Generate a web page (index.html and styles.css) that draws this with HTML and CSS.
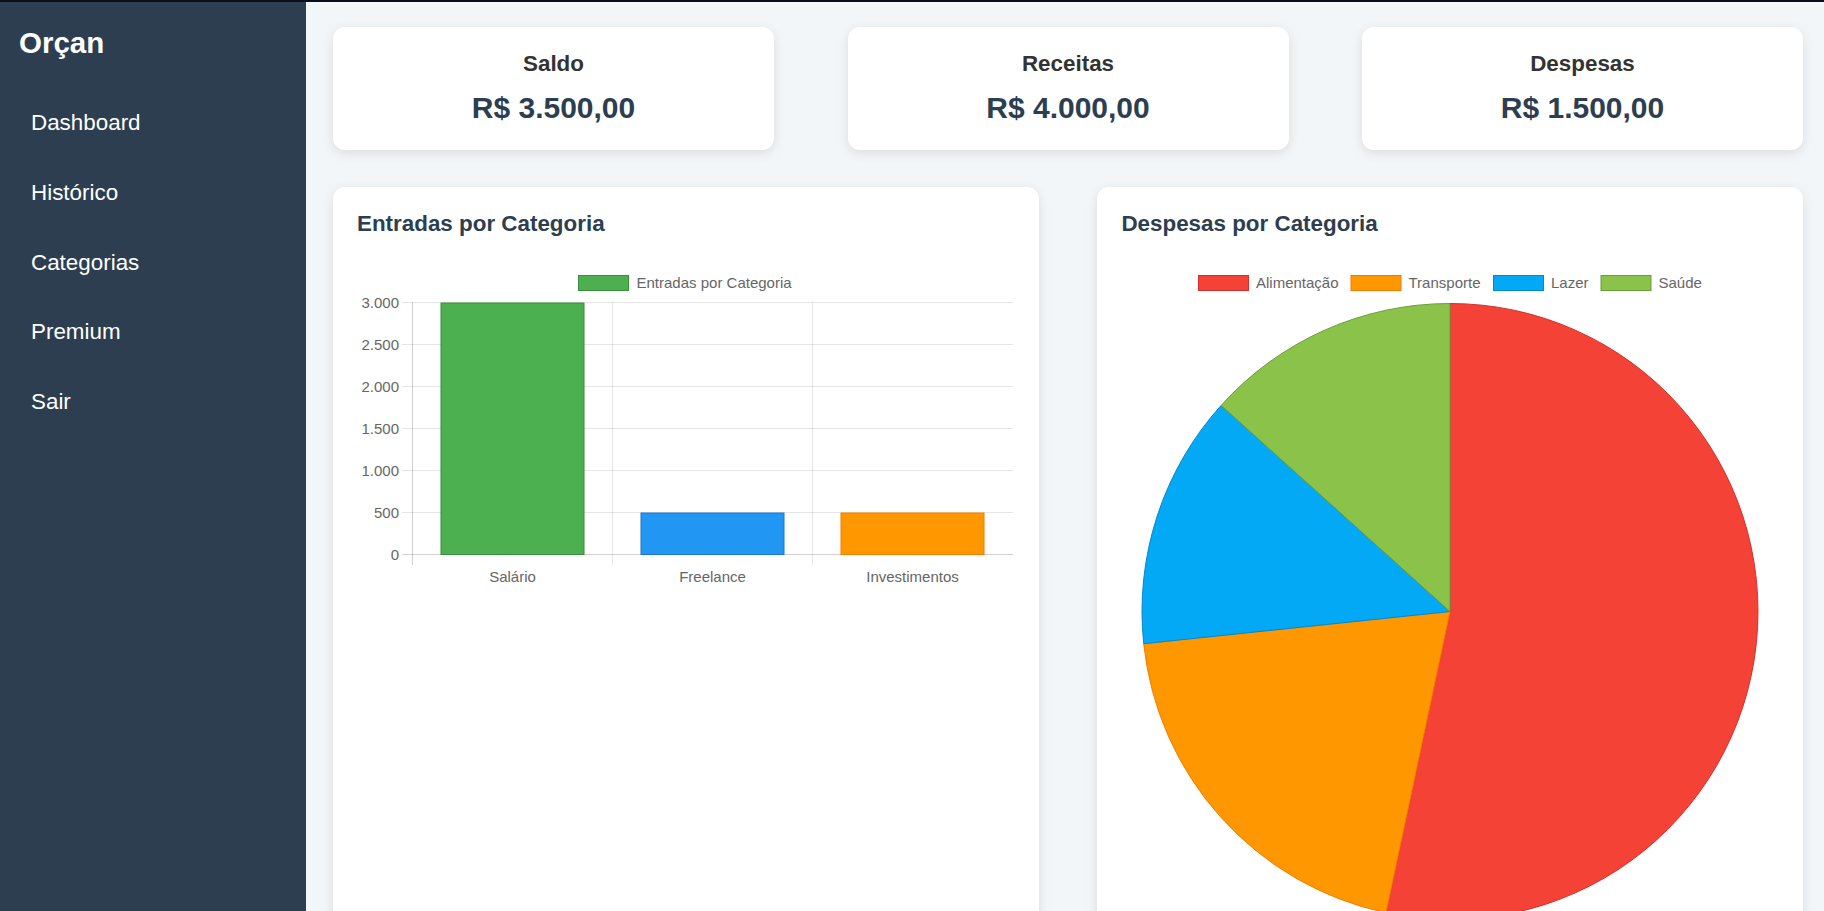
FILE: index.html
```html
<!DOCTYPE html>
<html lang="pt-BR">
<head>
<meta charset="utf-8">
<title>Orçan - Dashboard</title>
<link rel="stylesheet" href="styles.css">
</head>
<body>
<div class="topbar"></div>
<div class="app">
  <aside class="sidebar">
    <h2 class="brand">Orçan</h2>
    <nav class="nav">
      <a class="nav-link" href="#">Dashboard</a>
      <a class="nav-link" href="#">Histórico</a>
      <a class="nav-link" href="#">Categorias</a>
      <a class="nav-link" href="#">Premium</a>
      <a class="nav-link" href="#">Sair</a>
    </nav>
  </aside>
  <main class="main">
    <section class="stats">
      <div class="stat-card">
        <h3 class="stat-title">Saldo</h3>
        <p class="stat-value">R$ 3.500,00</p>
      </div>
      <div class="stat-card">
        <h3 class="stat-title">Receitas</h3>
        <p class="stat-value">R$ 4.000,00</p>
      </div>
      <div class="stat-card">
        <h3 class="stat-title">Despesas</h3>
        <p class="stat-value">R$ 1.500,00</p>
      </div>
    </section>
    <section class="charts">
      <div class="chart-card">
        <h3 class="chart-title">Entradas por Categoria</h3>
        <svg class="chart" width="656" height="328" viewBox="0 0 656 328">
          <rect x="221.5" y="13.5" width="50" height="15" fill="#4caf50" stroke="#388e3c" stroke-width="1"/>
          <text class="chart-text" x="279.5" y="25.5">Entradas por Categoria</text>
          <g stroke="rgba(0,0,0,0.1)" stroke-width="1">
            <line x1="45" y1="40.5" x2="656" y2="40.5"/>
            <line x1="45" y1="82.5" x2="656" y2="82.5"/>
            <line x1="45" y1="124.5" x2="656" y2="124.5"/>
            <line x1="45" y1="166.5" x2="656" y2="166.5"/>
            <line x1="45" y1="208.5" x2="656" y2="208.5"/>
            <line x1="45" y1="250.5" x2="656" y2="250.5"/>
            <line x1="255.5" y1="40.5" x2="255.5" y2="303"/>
            <line x1="455.5" y1="40.5" x2="455.5" y2="303"/>
          </g>
          <g stroke="rgba(0,0,0,0.18)" stroke-width="1">
            <line x1="45" y1="292.5" x2="656" y2="292.5"/>
            <line x1="55.5" y1="40.5" x2="55.5" y2="303"/>
          </g>
          <g class="chart-text" text-anchor="end">
            <text x="42" y="45.5">3.000</text>
            <text x="42" y="87.5">2.500</text>
            <text x="42" y="129.5">2.000</text>
            <text x="42" y="171.5">1.500</text>
            <text x="42" y="213.5">1.000</text>
            <text x="42" y="255.5">500</text>
            <text x="42" y="297.5">0</text>
          </g>
          <rect x="84" y="41" width="143" height="251.5" fill="#4caf50" stroke="#388e3c" stroke-width="1"/>
          <rect x="284" y="251" width="143" height="41.5" fill="#2196f3" stroke="#1976d2" stroke-width="1"/>
          <rect x="484" y="251" width="143" height="41.5" fill="#ff9800" stroke="#f57c00" stroke-width="1"/>
          <g class="chart-text" text-anchor="middle">
            <text x="155.5" y="320">Salário</text>
            <text x="355.5" y="320">Freelance</text>
            <text x="555.5" y="320">Investimentos</text>
          </g>
        </svg>
      </div>
      <div class="chart-card">
        <h3 class="chart-title">Despesas por Categoria</h3>
        <svg class="chart" width="658" height="658" viewBox="0 0 658 658">
          <g class="chart-text">
            <rect x="77.5" y="13.5" width="50" height="15" fill="#f44336" stroke="#d32f2f"/>
            <text x="135" y="25.5">Alimentação</text>
            <rect x="230" y="13.5" width="50" height="15" fill="#ff9800" stroke="#f57c00"/>
            <text x="287.5" y="25.5">Transporte</text>
            <rect x="372.5" y="13.5" width="50" height="15" fill="#03a9f4" stroke="#0288d1"/>
            <text x="430" y="25.5">Lazer</text>
            <rect x="480" y="13.5" width="50" height="15" fill="#8bc34a" stroke="#689f38"/>
            <text x="537.5" y="25.5">Saúde</text>
          </g>
          <path d="M329 349.5 L329 41.5 A308 308 0 1 1 264.96 650.77 Z" fill="#f44336" stroke="#d32f2f" stroke-width="1"/>
          <path d="M329 349.5 L264.96 650.77 A308 308 0 0 1 22.69 381.69 Z" fill="#ff9800" stroke="#f57c00" stroke-width="1"/>
          <path d="M329 349.5 L22.69 381.69 A308 308 0 0 1 100.11 143.41 Z" fill="#03a9f4" stroke="#0288d1" stroke-width="1"/>
          <path d="M329 349.5 L100.11 143.41 A308 308 0 0 1 329 41.5 Z" fill="#8bc34a" stroke="#689f38" stroke-width="1"/>
        </svg>
      </div>
    </section>
  </main>
</div>
</body>
</html>
```

FILE: styles.css
```css
html, body {
  margin: 0;
  height: 100%;
  overflow: hidden;
}

body {
  font-family: "Liberation Sans", Arial, sans-serif;
  background: #f3f6f9;
}

.topbar {
  height: 2px;
  background: #0b0d18;
}

.app {
  display: flex;
  height: 909px;
}

.sidebar {
  width: 306px;
  flex: none;
  box-sizing: border-box;
  background: #2c3e50;
  color: #fff;
  padding: 24px 0 0 19px;
}

.brand {
  margin: 0;
  font-size: 29.5px;
  line-height: 34px;
  font-weight: bold;
}

.nav {
  display: flex;
  flex-direction: column;
  margin-top: 28.4px;
}

.nav-link {
  color: #fff;
  text-decoration: none;
  font-size: 22.4px;
  line-height: 25.6px;
  padding: 22px 0 22px 12px;
}

.main {
  flex: 1;
  min-width: 0;
  padding: 25px 21px 0 27px;
}

.stats {
  display: flex;
  justify-content: space-between;
}

.stat-card {
  width: 30%;
  box-sizing: border-box;
  background: #fff;
  border-radius: 12px;
  box-shadow: 0 3px 12px rgba(0, 0, 0, 0.1);
  padding: 24px 0 25px;
  text-align: center;
}

.stat-title {
  margin: 0 0 13px;
  font-size: 22.4px;
  line-height: 26px;
  font-weight: bold;
  color: #333;
}

.stat-value {
  margin: 0;
  font-size: 30px;
  line-height: 35px;
  font-weight: bold;
  color: #2c3e50;
}

.charts {
  display: flex;
  justify-content: space-between;
  margin-top: 37px;
}

.chart-card {
  width: 48%;
  box-sizing: border-box;
  background: #fff;
  border-radius: 12px;
  box-shadow: 0 3px 12px rgba(0, 0, 0, 0.1);
  padding: 24px 24px 40px;
}

.chart-title {
  margin: 0 0 25px;
  font-size: 22.4px;
  line-height: 26px;
  font-weight: bold;
  color: #2c3e50;
}

.chart {
  display: block;
  overflow: visible;
}

.chart-text {
  font-family: "Liberation Sans", Arial, sans-serif;
  font-size: 15px;
  fill: #666;
}
```
